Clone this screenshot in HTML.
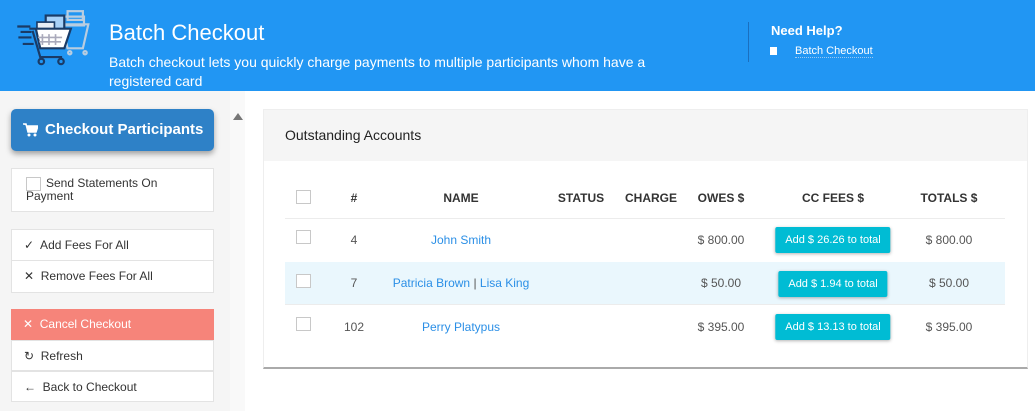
<!DOCTYPE html>
<html><head><style>
*{box-sizing:border-box;margin:0;padding:0}
body{width:1035px;height:411px;overflow:hidden;font-family:"Liberation Sans",sans-serif;background:#fff;position:relative;font-size:12px;color:#444}
.hdr{position:absolute;left:0;top:0;width:1035px;height:91px;background:#2196f3;color:#fff}
.a{position:absolute}
.side{position:absolute;left:0;top:91px;width:230px;height:320px;background:#f5f5f5}
.strip{position:absolute;left:230px;top:91px;width:15px;height:320px;background:#f9f9f9}
.box{position:absolute;left:11px;width:203px;background:#fff;border:1px solid #e3e3e3}
.item{height:31px;line-height:30px;padding-left:12px;font-size:12px;color:#333;border-bottom:1px solid #e3e3e3}
.cb{position:absolute;width:15px;height:14px;border:1px solid #c8c8c8;background:#fff}
.th{position:absolute;top:191px;font-weight:bold;font-size:12px;color:#333;transform:translateX(-50%);white-space:nowrap}
.td{position:absolute;font-size:12px;color:#555;transform:translateX(-50%);white-space:nowrap}
.lk{color:#2b8fe6}
.btn{position:absolute;transform:translateX(-50%);background:#00bcd4;color:#fff;font-size:11px;height:26px;line-height:26px;padding:0 10px;border-radius:2px;box-shadow:0 1px 3px rgba(0,0,0,.3);white-space:nowrap;font-weight:500}
</style></head><body>
<div class="hdr">
<svg class="a" style="left:14px;top:10px" width="82" height="57" viewBox="0 0 75 52">
<g fill="none" stroke="#b9cde0" stroke-width="2"><rect x="49" y="1" width="14" height="8"/><path d="M46 6h18v8H46zM44 13h24l-5 22H49z"/><circle cx="51" cy="39" r="1.5"/><circle cx="65" cy="39" r="1.5"/></g>
<rect x="29" y="5" width="17" height="18" fill="#a8d1f7" stroke="#1a3b66" stroke-width="2"/>
<rect x="21" y="11" width="16" height="10" fill="#e8eef5" stroke="#1a3b66" stroke-width="1.5"/>
<path d="M3 15h12M6 20h10M4 25h12M8 31h10" stroke="#1a3b66" stroke-width="2"/>
<path d="M14 17l6 0 4 18h22l6-18z" fill="#fff" stroke="#1a3b66" stroke-width="2"/>
<path d="M26 22v10M32 22v10M38 22v10M22 25h22M23 29h20" stroke="#aab" stroke-width="1.5"/>
<path d="M17 19l7 24h20" fill="none" stroke="#1a3b66" stroke-width="2"/>
<circle cx="25" cy="47" r="2.5" fill="none" stroke="#1a3b66" stroke-width="2"/><circle cx="43" cy="47" r="2.5" fill="none" stroke="#1a3b66" stroke-width="2"/>
</svg>
<div class="a" style="left:109px;top:20px;font-size:22px">Batch Checkout</div>
<div class="a" style="left:109px;top:53px;font-size:14px;line-height:19px;width:580px">Batch checkout lets you quickly charge payments to multiple participants whom have a registered card</div>
<div class="a" style="left:748px;top:22px;width:1px;height:40px;background:#1a6fbf"></div>
<div class="a" style="left:771px;top:23px;font-size:13px;font-weight:bold">Need Help?</div>
<div class="a" style="left:770px;top:47px;width:7px;height:8px;background:#fff"></div>
<div class="a" style="left:795px;top:45px;font-size:11px;border-bottom:1px dotted #9cc8f0">Batch Checkout</div>
</div>
<div class="side">
<div class="a" style="left:11px;top:18px;width:203px;height:42px;background:#2e81c7;border-radius:5px;box-shadow:0 3px 6px rgba(0,0,0,.35);color:#fff;font-size:15px;font-weight:bold;line-height:42px;padding-left:34px">Checkout Participants
<svg class="a" style="left:12px;top:14px" width="15" height="14" viewBox="0 0 15 14"><path d="M0 1h3l2 8h8l2-6H4" fill="#fff" stroke="#fff" stroke-width="1.5"/><circle cx="6" cy="12" r="1.5" fill="#fff"/><circle cx="12" cy="12" r="1.5" fill="#fff"/></svg></div>
<div class="box" style="top:77px;height:44px;padding:8px 0 0 14px;font-size:12px;line-height:13px;color:#333">
<div class="cb" style="position:absolute;left:14px;top:8px"></div><span style="margin-left:20px">Send Statements On</span><br>Payment</div>
<div class="box" style="top:138px"><div class="item">✓&nbsp; Add Fees For All</div><div class="item" style="border:0">✕&nbsp; Remove Fees For All</div></div>
<div class="box" style="top:218px;border:0"><div class="item" style="background:#f6847a;color:#fff;border:0">✕&nbsp; Cancel Checkout</div>
<div class="item" style="border:1px solid #e3e3e3">↻&nbsp; Refresh</div><div class="item" style="border:1px solid #e3e3e3;margin-top:0">←&nbsp; Back to Checkout</div></div>
</div>
<div class="strip"><div class="a" style="left:3px;top:22px;width:0;height:0;border-left:5px solid transparent;border-right:5px solid transparent;border-bottom:7px solid #777"></div></div>
<div class="a" style="left:263px;top:109px;width:765px;height:260px;border:1px solid #eee;border-bottom:2px solid #aaa;background:#fff"></div>
<div class="a" style="left:264px;top:110px;width:763px;height:51px;background:#f5f5f5"></div>
<div class="a" style="left:285px;top:127px;font-size:14px;color:#222">Outstanding Accounts</div>
<div class="a" style="left:285px;top:218px;width:720px;height:1px;background:#ececec"></div>
<div class="a" style="left:285px;top:262px;width:720px;height:43px;background:#eaf7fd;border-bottom:1px solid #ececec"></div>
<div class="cb" style="left:296px;top:190px"></div><div class="cb" style="left:296px;top:230px"></div><div class="cb" style="left:296px;top:274px"></div><div class="cb" style="left:296px;top:317px"></div>
<div class="th" style="left:354px">#</div><div class="th" style="left:461px">NAME</div><div class="th" style="left:581px">STATUS</div><div class="th" style="left:651px">CHARGE</div><div class="th" style="left:721px">OWES $</div><div class="th" style="left:833px">CC FEES $</div><div class="th" style="left:949px">TOTALS $</div>
<div class="td" style="left:354px;top:233px">4</div><div class="td lk" style="left:461px;top:233px">John Smith</div><div class="td" style="left:721px;top:233px">$ 800.00</div><div class="btn" style="left:833px;top:227px">Add $ 26.26 to total</div><div class="td" style="left:949px;top:233px">$ 800.00</div>
<div class="td" style="left:354px;top:276px">7</div><div class="td lk" style="left:461px;top:276px">Patricia Brown <span style="color:#555">|</span> Lisa King</div><div class="td" style="left:721px;top:276px">$ 50.00</div><div class="btn" style="left:833px;top:271px">Add $ 1.94 to total</div><div class="td" style="left:949px;top:276px">$ 50.00</div>
<div class="td" style="left:354px;top:320px">102</div><div class="td lk" style="left:461px;top:320px">Perry Platypus</div><div class="td" style="left:721px;top:320px">$ 395.00</div><div class="btn" style="left:833px;top:314px">Add $ 13.13 to total</div><div class="td" style="left:949px;top:320px">$ 395.00</div>
</body></html>
